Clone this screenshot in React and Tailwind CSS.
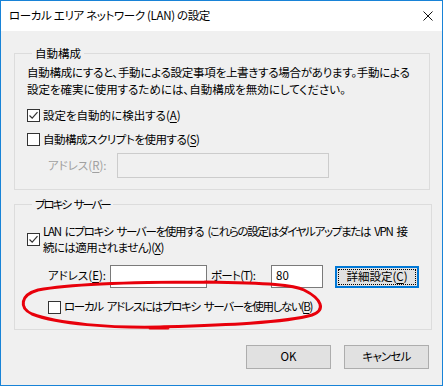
import React from 'react';

const FONT = "font-['Noto_Sans_CJK_JP','Noto_Sans',sans-serif] [font-feature-settings:'palt']";

function U({ children }) {
  return <span className="underline underline-offset-2">{children}</span>;
}

// word gap that survives the negative tracking
function Sp() {
  return <span className="inline-block w-[4px]" />;
}

function Check({ checked }) {
  return (
    <span className="flex h-[13px] w-[13px] shrink-0 items-center justify-center border border-[#333333] bg-white">
      {checked ? (
        <svg width="11" height="11" viewBox="0 0 11 11">
          <path d="M1.5 5.5 L4.2 8.2 L9.5 2.2" fill="none" stroke="#333333" strokeWidth="1.2" />
        </svg>
      ) : null}
    </span>
  );
}

function Group({ title, legendClass = '', className, children }) {
  return (
    <fieldset className={`border border-[#dcdcdc] px-[12px] ${className}`}>
      <legend className={`ml-[5px] px-[3px] leading-[16px] whitespace-nowrap ${legendClass}`}>{title}</legend>
      {children}
    </fieldset>
  );
}

function Button({ children, focused, className = '' }) {
  if (focused) {
    return (
      <button className="flex h-[22px] w-[84px] items-center justify-center border-2 border-[#0078d7] bg-[#e1e1e1] p-px">
        <span className="flex h-full w-full items-center justify-center border border-dotted border-black leading-none">{children}</span>
      </button>
    );
  }
  return (
    <button className={`flex h-[24px] w-[85px] items-center justify-center border border-[#adadad] bg-[#e1e1e1] leading-none ${className}`}>
      {children}
    </button>
  );
}

export default function App() {
  return (
    <div className={`relative flex h-[386px] w-[443px] flex-col border border-[#1883d7] bg-[#f0f0f0] text-[11.5px] text-black ${FONT}`}>
      <div className="flex h-[30px] items-center justify-between bg-white pl-[8px] pr-[9px]">
        <span className="leading-none tracking-[-0.35px] whitespace-nowrap">ローカル エリア ネットワーク (LAN) の設定</span>
        <svg width="10" height="10" viewBox="0 0 10 10">
          <path d="M0.5 0.5 L9.5 9.5 M9.5 0.5 L0.5 9.5" stroke="#111111" strokeWidth="1" />
        </svg>
      </div>

      <div className="flex flex-col pl-[13px] pr-[12px]">
        <Group title="自動構成" className="mt-[14px] pb-[11px]">
          <div className="mt-[3px] leading-[17px] whitespace-nowrap">
            <p className="tracking-[-0.27px]">自動構成にすると、手動による設定事項を上書きする場合があります。手動による</p>
            <p>設定を確実に使用するためには、自動構成を無効にしてください。</p>
          </div>
          <label className="mt-[9px] flex h-[17px] items-center gap-[3px]">
            <Check checked />
            <span className="whitespace-nowrap">設定を自動的に検出する(<U>A</U>)</span>
          </label>
          <label className="mt-[7px] flex h-[17px] items-center gap-[3px]">
            <Check />
            <span className="tracking-[-0.47px] whitespace-nowrap">自動構成スクリプトを使用する(<U>S</U>)</span>
          </label>
          <div className="mt-[5px] flex items-center pl-[21px]">
            <span className="w-[69px] whitespace-nowrap text-[#a0a0a0]">アドレス(<U>R</U>):</span>
            <div className="h-[25px] w-[212px] border border-[#cccccc] bg-[#f0f0f0]" />
          </div>
        </Group>

        <Group
          title={<>プロキシ<Sp />サーバー</>}
          legendClass="tracking-[-2.1px]"
          className="mt-[6px] pb-[14px]"
        >
          <label className="mt-[11px] flex items-center gap-[3px]">
            <Check checked />
            <span className="flex flex-col leading-[16px] whitespace-nowrap">
              <span className="tracking-[-1.3px]">
                LAN<Sp />にプロキシ<Sp />サーバーを使用する<Sp />(これらの設定はダイヤルアップまたは<Sp />VPN<Sp />接
              </span>
              <span className="tracking-[-0.6px]">続には適用されません)(<U>X</U>)</span>
            </span>
          </label>
          <div className="mt-[9px] flex items-center pl-[21px]">
            <span className="w-[62px] whitespace-nowrap">アドレス(<U>E</U>):</span>
            <div className="h-[23px] w-[97px] border border-[#7a7a7a] bg-white" />
            <span className="ml-[4px] w-[60px] tracking-[-0.7px] whitespace-nowrap">ポート(<U>T</U>):</span>
            <div className="flex h-[23px] w-[52px] items-center border border-[#7a7a7a] bg-white pl-[4px]">80</div>
            <div className="ml-[12px] mt-[2px]">
              <Button focused>
                詳細設定(<U>C</U>)
              </Button>
            </div>
          </div>
          <label className="mt-[11px] flex h-[16px] items-center gap-[3px] pl-[21px]">
            <Check />
            <span className="tracking-[-1.3px] whitespace-nowrap">
              ローカル<Sp />アドレスにはプロキシ<Sp />サーバーを使用しない(<U>B</U>)
            </span>
          </label>
        </Group>
      </div>

      <div className="mt-auto mb-[16px] flex justify-end gap-[13px] pr-[13px]">
        <Button>OK</Button>
        <Button className="tracking-[-0.8px]">キャンセル</Button>
      </div>

      <svg className="pointer-events-none absolute left-[-1px] top-[-1px]" width="443" height="386" viewBox="0 0 443 386">
        <path
          d="M205 282 C140 282 70 284 38 290 C20 295 19 308 32 314 C58 324 110 328 160 327 C220 325 285 323 312 315 C326 310 322 299 304 290 C294 285 270 283 205 282 M150 328 L168 328"
          fill="none"
          stroke="#e8000b"
          strokeWidth="3"
          strokeLinecap="round"
        />
      </svg>
    </div>
  );
}
